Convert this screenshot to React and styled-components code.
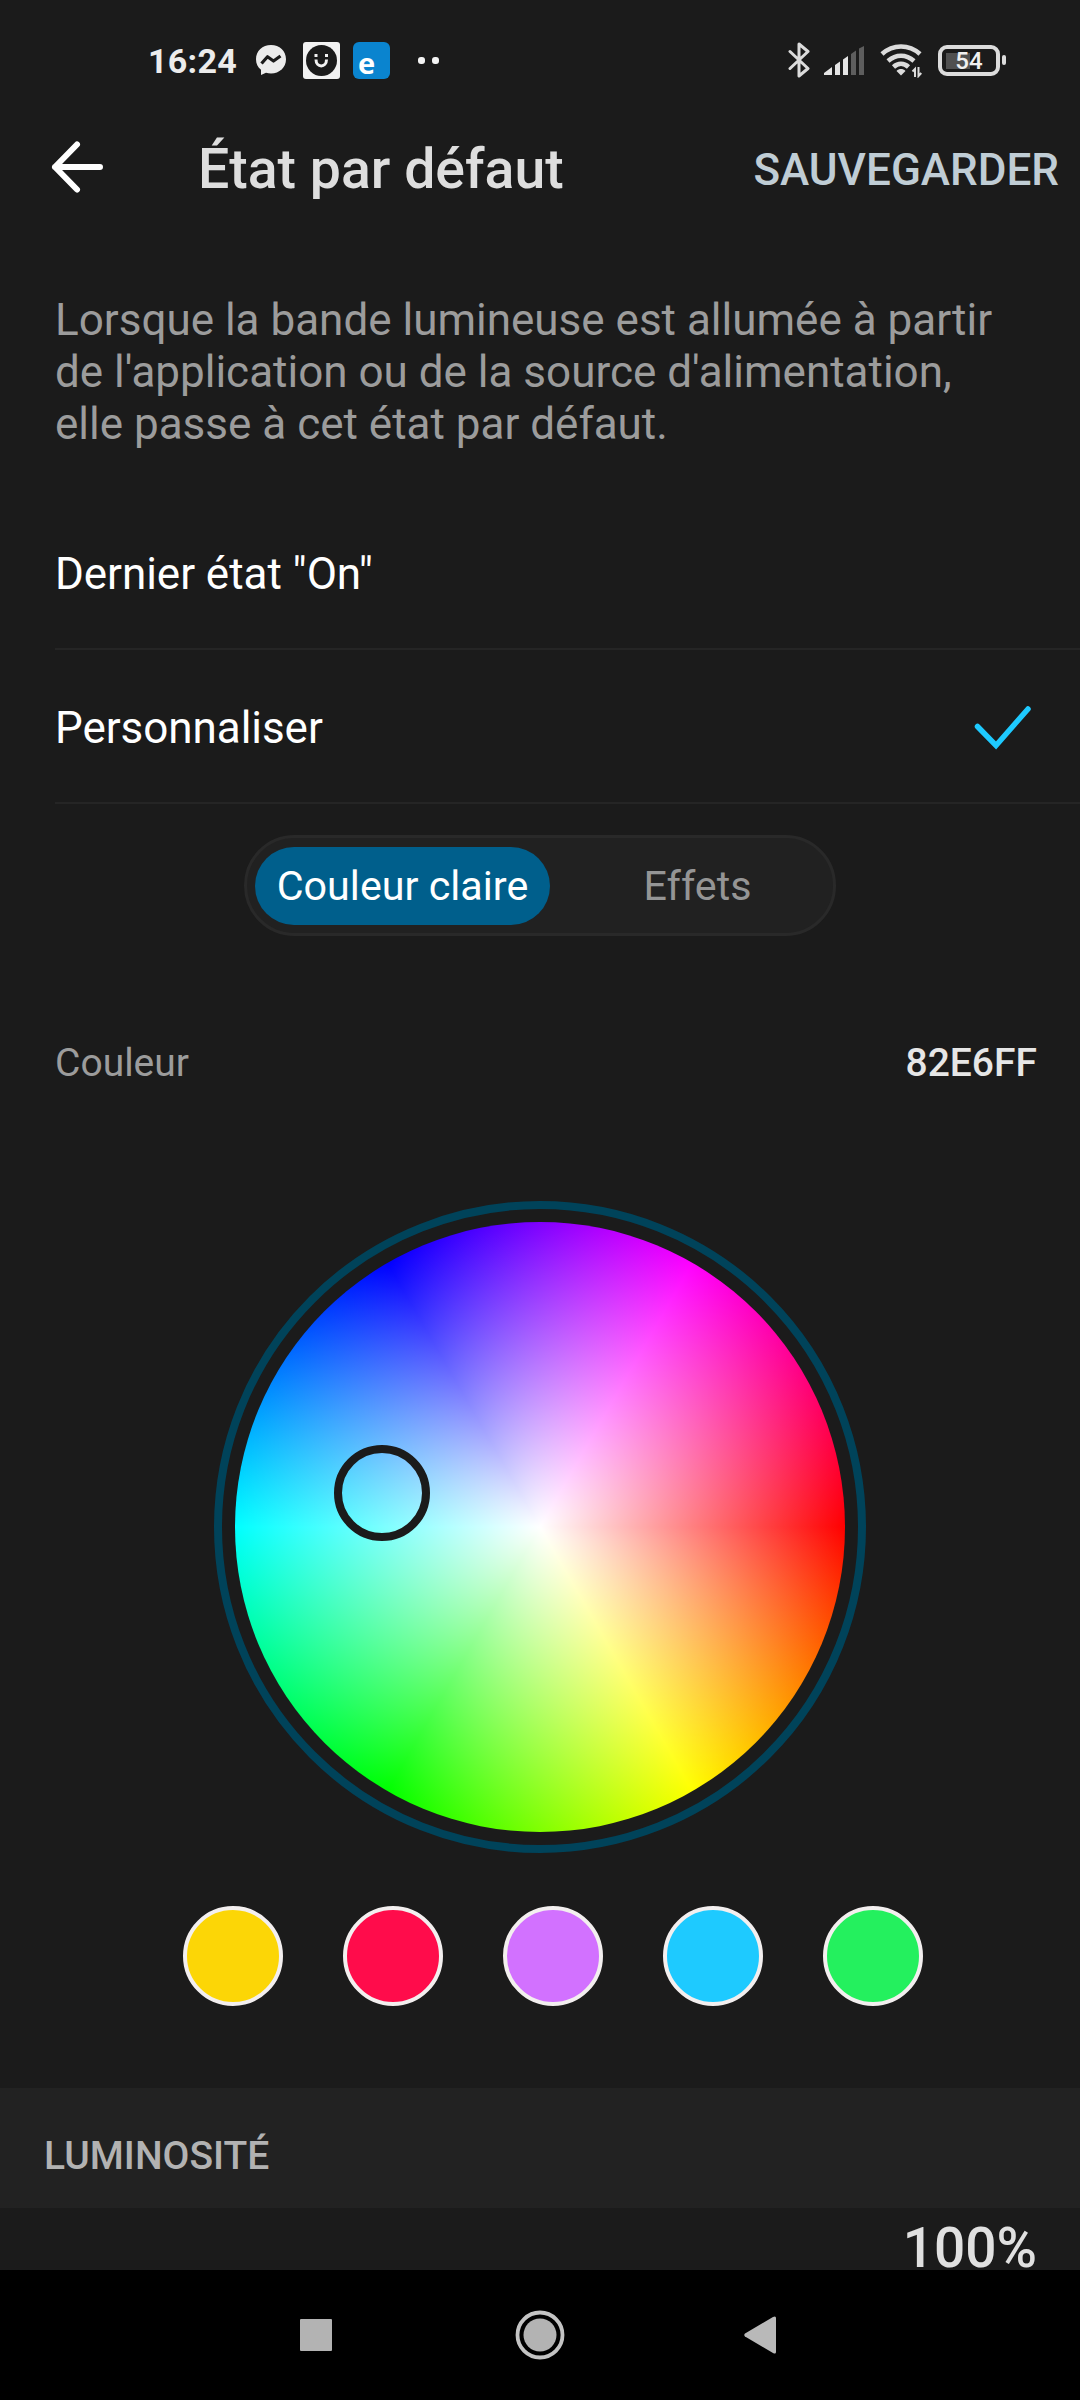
import React, { useState } from 'react';
import styled, { createGlobalStyle } from 'styled-components';

const GlobalStyle = createGlobalStyle`
  * {
    box-sizing: border-box;
  }

  body {
    margin: 0;
    background: #1b1b1b;
    font-family: Roboto, "Liberation Sans", sans-serif;
  }

  button {
    font-family: inherit;
    border: none;
    background: none;
    padding: 0;
    margin: 0;
  }
`;

const Screen = styled.div`
  width: 1080px;
  height: 2400px;
  display: flex;
  flex-direction: column;
  background: #1b1b1b;
  color: #ffffff;
  overflow: hidden;
  white-space: nowrap;
`;

const StatusBar = styled.div`
  height: 120px;
  flex: none;
  display: flex;
  justify-content: space-between;
  align-items: center;
  padding: 0 74px 0 148px;
`;

const StatusGroup = styled.div`
  display: flex;
  align-items: center;

  svg {
    display: block;
    flex: none;
  }
`;

const Clock = styled.span`
  width: 107px;
  font-size: 34px;
  font-weight: 700;
  line-height: 40px;
  letter-spacing: 0.3px;
  color: #ececec;
  padding-top: 2px;
`;

const AppBadge = styled.span`
  width: 37px;
  height: 37px;
  margin-left: 13px;
  padding: 0 0 2px 5px;
  border-radius: 6px;
  background: #0a84cf;
  color: #ffffff;
  font-family: "Open Sans", sans-serif;
  font-size: 29px;
  font-weight: 700;
  line-height: 41px;
`;

const MoreDots = styled.span`
  display: flex;
  gap: 7px;
  margin-left: 28px;

  i {
    width: 7px;
    height: 7px;
    border-radius: 3px;
    background: #f4f4f4;
  }
`;

const Battery = styled.span`
  display: flex;
  align-items: center;
  margin-left: 16px;

  &::after {
    content: '';
    width: 4px;
    height: 10px;
    margin-left: 2px;
    border-radius: 2px;
    background: #dcdcdc;
  }
`;

const BatteryBody = styled.span`
  width: 62px;
  height: 31px;
  border: 4px solid #dcdcdc;
  border-radius: 9px;
  display: flex;
  align-items: center;
  justify-content: center;
  background: linear-gradient(#505050, #505050) 4px 4px / 24px 16px no-repeat;
  color: #f0f0f0;
  font-size: 24px;
  font-weight: 500;
  line-height: 24px;
  padding-top: 2px;
`;

const Header = styled.header`
  height: 100px;
  flex: none;
  display: flex;
  align-items: center;
  padding: 0 21px 0 49px;
`;

const BackButton = styled.button`
  width: 56px;
  height: 56px;
  margin: 0 93px 6px 0;

  svg {
    display: block;
  }
`;

const Title = styled.h1`
  flex: 1;
  margin: 0;
  font-size: 55.4px;
  font-weight: 500;
  line-height: 64px;
  color: #dedede;
`;

const SaveButton = styled.button`
  font-size: 44px;
  font-weight: 500;
  line-height: 52px;
  color: #c0cdd5;
  padding-bottom: 1px;
`;

const Description = styled.p`
  margin: 74px 55px 0;
  height: 156px;
  flex: none;
  font-size: 44px;
  line-height: 52px;
  color: #9c9c9c;
`;

const OptionList = styled.div`
  margin: 46px 0 0 55px;
  flex: none;
`;

const Option = styled.div`
  height: 154px;
  display: flex;
  align-items: center;
  justify-content: space-between;
  padding: 3px 48px 0 0;
  border-bottom: 2px solid #252525;
  font-size: 44px;
  line-height: 52px;
  letter-spacing: -0.05px;
  color: #ffffff;
`;

const Segmented = styled.div`
  width: 592px;
  height: 101px;
  flex: none;
  display: flex;
  align-self: center;
  margin-top: 31px;
  padding: 9px 8px 8px;
  border: 3px solid #292929;
  border-radius: 51px;
  background: #212121;
`;

const Segment = styled.button`
  flex: none;
  width: 295px;
  height: 78px;
  border-radius: 39px;
  font-size: 41.25px;
  line-height: 79px;
  color: ${props => (props.$active ? '#ffffff' : '#959595')};
  background: ${props => (props.$active ? '#005f8c' : 'transparent')};
`;

const ColorRow = styled.div`
  display: flex;
  flex: none;
  justify-content: space-between;
  margin-top: 102px;
  padding: 0 43px 0 55px;
  font-size: 39px;
  line-height: 50px;
`;

const ColorLabel = styled.span`
  color: #9c9c9c;
`;

const ColorValue = styled.span`
  font-weight: 500;
  color: #e6e6e6;
`;

const WheelRing = styled.div`
  width: 652px;
  height: 652px;
  flex: none;
  align-self: center;
  margin-top: 113px;
  padding: 13px;
  border: 8px solid #00435a;
  border-radius: 50%;
`;

const Wheel = styled.div`
  position: relative;
  width: 610px;
  height: 610px;
  border-radius: 50%;
  background:
    radial-gradient(closest-side, #ffffff, rgba(255, 255, 255, 0)),
    conic-gradient(from 90deg, #ff0000, #ffff00, #00ff00, #00ffff, #0000ff, #ff00ff, #ff0000);
`;

const Picker = styled.div`
  position: absolute;
  left: 99px;
  top: 223px;
  width: 96px;
  height: 96px;
  border: 8px solid #1b1b1b;
  border-radius: 50%;
`;

const SwatchRow = styled.div`
  display: flex;
  flex: none;
  gap: 60px;
  margin: 53px 0 0 183px;
`;

const Swatch = styled.button`
  width: 100px;
  height: 100px;
  border: 4px solid #f3efef;
  border-radius: 50%;
  background: ${props => props.$color};
`;

const SectionHeader = styled.div`
  height: 120px;
  flex: none;
  margin-top: 82px;
  padding: 43px 0 0 44px;
  background: #222222;
  font-size: 39px;
  font-weight: 500;
  line-height: 50px;
  color: #b2b2b2;
`;

const Brightness = styled.div`
  height: 62px;
  flex: none;
  padding: 18px 43px 0 0;
  text-align: right;
  font-size: 55px;
  font-weight: 500;
  line-height: 44px;
  color: #e0e0e0;
`;

const NavBar = styled.nav`
  flex: 1;
  display: flex;
  align-items: center;
  justify-content: space-between;
  padding: 0 303px 0 300px;
  background: #000000;

  svg {
    display: block;
  }
`;

const HomeIcon = styled.svg`
  margin-left: 3px;
`;

const SWATCHES = ['#fcd606', '#ff0c4b', '#d271ff', '#1ecaff', '#24f05e'];

const MessengerIcon = () => (
  <svg width="32" height="34" viewBox="0 0 32 34">
    <path d="M16 2C7.500 2 1 8 1 16.200c0 4.500 1.800 8 5 10.600V32l5-2.200c1.600.4 3.200.6 5 .6 8.500 0 15-6 15-14.200S24.500 2 16 2z" fill="#ececec" />
    <path d="M6.500 20.500l6-6.800 6 4.300 7-5" fill="none" stroke="#1b1b1b" strokeWidth="3.200" strokeLinejoin="round" />
  </svg>
);

const SmileSvg = styled.svg`
  margin-left: 16px;
`;

const SmileIcon = () => (
  <SmileSvg width="37" height="37" viewBox="0 0 37 37">
    <rect width="37" height="37" rx="3" fill="#f2f2f2" />
    <circle cx="18.500" cy="18.500" r="15.500" fill="#1b1b1b" />
    <path d="M13 12v3M23.500 12v3M13 17.500c0 8.500 10.500 8.500 10.500 0" fill="none" stroke="#f2f2f2" strokeWidth="3" />
  </SmileSvg>
);

const BluetoothIcon = () => (
  <svg width="23" height="36" viewBox="0 0 23 36">
    <path d="M2 9.500l18 17-9 7.500V2l9 7.500-18 17" fill="none" stroke="#dcdcdc" strokeWidth="3" strokeLinejoin="round" strokeLinecap="round" />
  </svg>
);

const SignalSvg = styled.svg`
  margin-left: 13px;
`;

const SignalIcon = () => (
  <SignalSvg width="40" height="29" viewBox="0 0 40 29">
    <path d="M0 29v-2l8-6v8zM11 29V19l5-3.500V29zM19 29V13.500l5-3.500V29z" fill="#e4e4e4" />
    <path d="M27 29V8l5-3.500V29zM35 29V2.500L40 0v29z" fill="#5e5e5e" />
  </SignalSvg>
);

const WifiSvg = styled.svg`
  margin-left: 16px;
`;

const WifiIcon = () => (
  <WifiSvg width="42" height="35" viewBox="0 0 42 35">
    <path d="M2 11C13 1 29 1 40 11M8 18c8-7 18-7 26 0M13.500 24c4.500-4.200 10.500-4.200 15 0" fill="none" stroke="#dcdcdc" strokeWidth="4.600" />
    <path d="M16.500 28c2.500-2.600 6.500-2.600 9 0L21 32.500z" fill="#dcdcdc" />
    <path d="M35 34v-8l-2.500 2.500M38.500 24v9l2.800-3" fill="none" stroke="#dcdcdc" strokeWidth="2" />
  </WifiSvg>
);

const ArrowIcon = () => (
  <svg width="56" height="56" viewBox="0 0 56 56">
    <path d="M28 5.500L6 28l22 22.500M6 28h45" fill="none" stroke="#ffffff" strokeWidth="6" strokeLinecap="round" strokeLinejoin="round" />
  </svg>
);

const CheckIcon = () => (
  <svg width="60" height="48" viewBox="0 0 60 48">
    <path d="M5.500 22.500L24 41.500 56 5" fill="none" stroke="#1ecaff" strokeWidth="5.500" strokeLinecap="round" />
  </svg>
);

const App = () => {
  const [mode, setMode] = useState('color');
  const [selected, setSelected] = useState('custom');

  return (
    <Screen>
      <GlobalStyle />

      <StatusBar>
        <StatusGroup>
          <Clock>16:24</Clock>
          <MessengerIcon />
          <SmileIcon />
          <AppBadge>e</AppBadge>
          <MoreDots>
            <i />
            <i />
          </MoreDots>
        </StatusGroup>
        <StatusGroup>
          <BluetoothIcon />
          <SignalIcon />
          <WifiIcon />
          <Battery>
            <BatteryBody>54</BatteryBody>
          </Battery>
        </StatusGroup>
      </StatusBar>

      <Header>
        <BackButton><ArrowIcon /></BackButton>
        <Title>État par défaut</Title>
        <SaveButton>SAUVEGARDER</SaveButton>
      </Header>

      <Description>
        Lorsque la bande lumineuse est allumée à partir<br />
        de l'application ou de la source d'alimentation,<br />
        elle passe à cet état par défaut.
      </Description>

      <OptionList>
        <Option onClick={() => setSelected('last')}>
          Dernier état "On"
          {selected === 'last' && <CheckIcon />}
        </Option>
        <Option onClick={() => setSelected('custom')}>
          Personnaliser
          {selected === 'custom' && <CheckIcon />}
        </Option>
      </OptionList>

      <Segmented>
        <Segment $active={mode === 'color'} onClick={() => setMode('color')}>Couleur claire</Segment>
        <Segment $active={mode === 'effects'} onClick={() => setMode('effects')}>Effets</Segment>
      </Segmented>

      <ColorRow>
        <ColorLabel>Couleur</ColorLabel>
        <ColorValue>82E6FF</ColorValue>
      </ColorRow>

      <WheelRing>
        <Wheel>
          <Picker />
        </Wheel>
      </WheelRing>

      <SwatchRow>
        {SWATCHES.map(color => (
          <Swatch key={color} $color={color} />
        ))}
      </SwatchRow>

      <SectionHeader>LUMINOSITÉ</SectionHeader>
      <Brightness>100%</Brightness>

      <NavBar>
        <svg width="32" height="32" viewBox="0 0 32 32">
          <rect width="32" height="32" rx="1" fill="#b3b3b3" />
        </svg>
        <HomeIcon width="50" height="50" viewBox="0 0 50 50">
          <circle cx="25" cy="25" r="22.500" fill="none" stroke="#c4c4c4" strokeWidth="3.800" />
          <circle cx="25" cy="25" r="16.500" fill="#b3b3b3" />
        </HomeIcon>
        <svg width="33" height="38" viewBox="0 0 33 38">
          <path d="M1 17.500L29 1q3-1.500 3 1v34q0 2.500-3 1L1 20.500q-1.500-1.500 0-3z" fill="#b9b9b9" />
        </svg>
      </NavBar>
    </Screen>
  );
};

export default App;
